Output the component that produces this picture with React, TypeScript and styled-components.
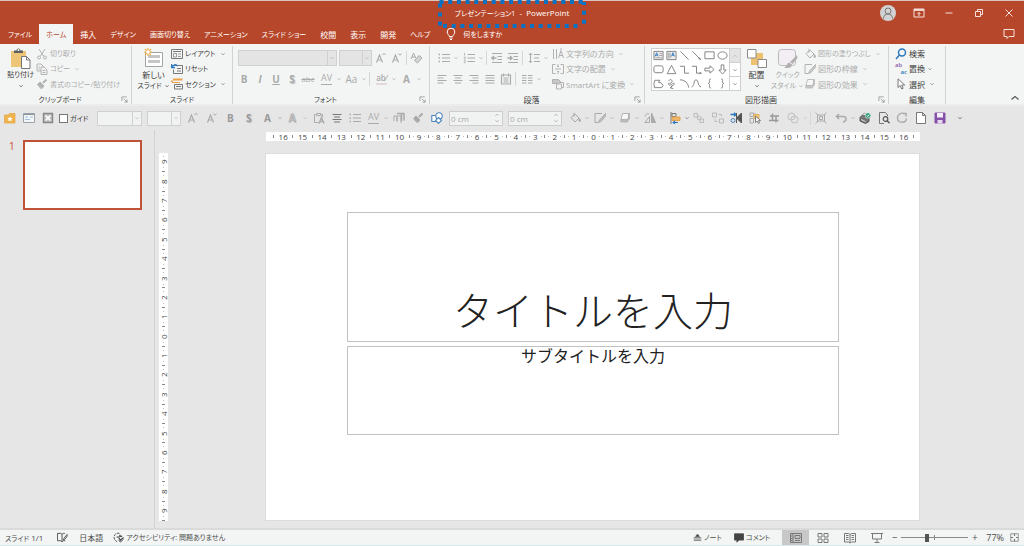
import React from "react";
import styled, { createGlobalStyle, css } from "styled-components";

const GlobalStyle = createGlobalStyle`
  *, *::before, *::after { box-sizing: border-box; }
  body { margin: 0; background: #e6e6e6; }
  body, button, input, select {
    font-family: "Open Sans", "Noto Sans CJK JP", sans-serif;
    font-size: 8px;
    line-height: 11px;
    font-feature-settings: "palt";
    color: #3b3b3b;
  }
  button { border: 0; padding: 0; background: none; white-space: nowrap; }
  svg { display: block; flex: none; }
`;

/* ---------- icons ---------- */

const art: Record<string, React.ReactNode> = {
  cut: <><path d="M3 1l4.500 7M9 1L4.500 8" /><circle cx="3" cy="9.500" r="1.500" /><circle cx="9" cy="9.500" r="1.500" /></>,
  copy: <><path d="M1 1h4l2 2v5H1z" /><path d="M5 4h3l3 3v4.500H5z" fill="#f3f3f3" /><path d="M6.500 7.500h3M6.500 9.500h3M2.500 4h1.500M2.500 6h1.500" /></>,
  brush: <><path d="M10.500 1.500L7 5" strokeWidth="2" /><path d="M4 4l4 4-2 2.500-4.500-4z" fill="currentColor" /><path d="M2.500 8l3 3" /></>,
  layout: <><path d="M.5 1.500h11v9H.5z" /><path d="M2 3.500h8" /><path d="M2.500 5.500h3v3.500h-3zM7 6h3M7 8.500h3" strokeWidth=".7" /></>,
  reset: <><path d="M3 2.500h8.500v8H2.500v-4M6 5.500h4M6 8h4" /><path d="M.5 1v3.500H4M.8 4.300C2 1.500 5 1 6.500 3" stroke="#2b78c0" strokeWidth="1.400" /></>,
  section: <><path d="M2 1.500h9.500M1 4V2.500" stroke="#e9a24a" strokeWidth="1.800" /><path d="M1 4.500h8" stroke="#e9a24a" /><path d="M3.500 6.500h8v4.500h-8z" /><path d="M5 8.500h5" /></>,
  fontUp: <><path d="M1.500 10.500L4.500 3l3 7.500M2.500 8h4" strokeWidth="1.200" /><path d="M7.500 3L9 1.300 10.500 3" /></>,
  fontDown: <><path d="M1.500 10.500L4.500 3l3 7.500M2.500 8h4" strokeWidth="1.200" /><path d="M7.500 1.500L9 3.200l1.500-1.700" /></>,
  eraser: <><path d="M1 7L3.500 1l2.200 5M2 5h3" /><path d="M4.500 8.500l4.500-5L12 6l-4.500 5z" fill="currentColor" fillOpacity=".45" /></>,
  bullets: <><path d="M4 2.500h8M4 6h8M4 9.500h8" /><path d="M.5 2.500H2M.5 6H2M.5 9.500H2" strokeWidth="1.600" /></>,
  numbers: <><path d="M4.500 2.500H12M4.500 6H12M4.500 9.500H12" /><path d="M1.500 1v2.500M.8 5h1.400v2H.8M.8 8.500h1.400v2.200H.8" strokeWidth=".8" /></>,
  outdent: <><path d="M1 1.500h10M6.500 4.500H11M6.500 7.500H11M1 10.500h10" /><path d="M5.500 6H.8M3 4L.8 6 3 8" strokeWidth="1.300" /></>,
  indent: <><path d="M1 1.500h10M6.500 4.500H11M6.500 7.500H11M1 10.500h10" /><path d="M.5 6h4.700M3 4l2.200 2L3 8" strokeWidth="1.300" /></>,
  spacing: <><path d="M6 2.500h6M6 6h5M6 9.500h6" /><path d="M2.500 1.500v9M.8 3l1.700-1.800L4.200 3M.8 9l1.700 1.800L4.200 9" /></>,
  left: <path d="M1.500 2.500h9M1.500 5h6M1.500 7.500h9M1.500 10h6" />,
  center: <path d="M1.500 2.500h9M3 5h6M1.500 7.500h9M3 10h6" />,
  right: <path d="M1.500 2.500h9M4.500 5h6M1.500 7.500h9M4.500 10h6" />,
  justify: <path d="M1.500 2.500h9M1.500 5h9M1.500 7.500h9M1.500 10h9" />,
  distribute: <path d="M1.500 2h9v9h-9zM3.500.5v3M8.500.5v3M3.500 5h5M3.500 7h5M3.500 9h5" strokeWidth="1.200" />,
  columns: <path d="M1 2.500h4.500M1 5h4.500M1 7.500h4.500M1 10h4.500M7 2.500h4.500M7 5h4.500M7 7.500h4.500M7 10h4.500" />,
  direction: <><path d="M1.500 1v10M4.500 1v10" /><path d="M6.500 10L9 2.500l2.500 7.500M7.200 7.500h3.600M9 0v2" /></>,
  textAlign: <><path d="M3.500 1.500h-3v9h3M8.500 1.500h3v9h-3M3 6h6" /><path d="M6 1v3M5 3l1 1 1-1M6 11V8M5 9l1-1 1 1" /></>,
  smartArt: <><path d="M.5 1.500h6l2 2-2 2h-6z" fill="currentColor" fillOpacity=".7" /><path d="M4.500 6h5v5h-5z" fill="#f3f3f3" /><path d="M7.500 4.500h4v5h-2" /></>,
  fill: <><path d="M2 5.500L6 2l4 4-4 4z" /><path d="M5 .8v4" /><path d="M10.500 6.500c1.500 2 1.200 3 .3 3s-1-1-.3-3z" fill="currentColor" /></>,
  outline: <><path d="M8 1.500H1v9h3" /><path d="M11.500 1.500L5.500 8l-1 2.500 2.500-1 5-6z" fill="currentColor" fillOpacity=".6" /></>,
  effect: <><path d="M3.500 2.500L5 1h6v5.500L8.500 10.500H2L1 9z" fill="currentColor" fillOpacity=".75" stroke="none" /><path d="M3.500 1.500h6v4.500l-2 1.500H2z" fill="#f6f6f6" strokeWidth=".8" /></>,
  search: <g stroke="#2b78c0" strokeWidth="1.500"><circle cx="7" cy="4.500" r="3.500" /><path d="M4.500 7L1 11" /></g>,
  select: <path d="M3 .8v8.700l2.200-2 1.500 3.500 1.500-.7-1.500-3.300h3z" fill="#fff" />,
  folder: <><path d="M.5 3h4l1-1.500H11V11H.5z" fill="#f0b44c" stroke="#e2a545" strokeWidth=".7" /><path d="M6 4.500l.8 1.600 1.800.2-1.300 1.200.3 1.800L6 8.400l-1.600.9.300-1.800-1.300-1.200 1.800-.2z" fill="#fff" stroke="none" /></>,
  form: <><path d="M.5 1.500h11v9H.5z" fill="#f3f5f7" stroke="#9aa2ab" /><path d="M.5 2.500h11" stroke="#8a929b" /><path d="M2 5h3M7 5h3M2 7.500h5" stroke="#9fc0de" /></>,
  closeBox: <><path d="M1.500 1.500h9v9h-9z" strokeWidth="1.400" fill="currentColor" fillOpacity=".4" /><path d="M3.500 3.500l5 5M8.500 3.500l-5 5" stroke="#fff" strokeWidth="1.600" /></>,
  pasteText: <><path d="M2.500 2.500h-1v8h4M8 2.500h1.500V5M3.500 1.500h4v2h-4z" /><path d="M6 11.500l2.500-6 2.500 6M7 9.500h3" strokeWidth="1.400" /></>,
  paragraph: <><path d="M1 4h7v7M1 4v5" /><path d="M4 1.500h7.500M11 1.500v7M8.500 2v7M4 4.500v5" strokeWidth="1.500" /></>,
  shapes: <g stroke="#4d86bd" strokeWidth="1.100"><path d="M.8 3.500h5v6h-5z" fill="#fff" /><circle cx="8" cy="4" r="3.200" fill="#fff" /><path d="M7.500 5.500l3 3-3 3-3-3z" fill="#fff" /></g>,
  rotate: <><path d="M7.500 1v9.500h4z" fill="currentColor" /><path d="M5.500 4.500v6H.8z" /><path d="M1 4.500C1.500 2 3.500 1.200 5 2" /></>,
  alignObj: <><path d="M2 0v12" stroke="#777" /><path d="M3 1.500h4v3H3z" stroke="#777" /><path d="M3 5h8v3.500H3z" fill="#f0b76a" stroke="#e2a14b" /><path d="M9 10.500H4M6 9l-1.800 1.500L6 12" stroke="#2b78c0" strokeWidth="1.200" /></>,
  group: <><path d="M1 1.500h3.500V5H1zM7 7h3.500v3.500H7z" /><circle cx="6" cy="6" r="1.800" /></>,
  ungroup: <path d="M.5 1h4v4h-4zM7.500 7h4v4h-4zM6.500 2.500h3v2M3 7v2.500h2.500" />,
  sync: <><path d="M11.500 1v10L6.500 6z" fill="#555" stroke="#555" /><path d="M.5 2.500h5M4 .8l2 1.700-2 1.800" stroke="#2b78c0" strokeWidth="1.300" /><circle cx="3" cy="8.500" r="2" stroke="#4d86bd" /><path d="M6.500 1v10" stroke="#555" /></>,
  pane: <><path d="M1 1h3.500v3.500H1zM1 6.500h3.500V11H1zM6 1v2" /><path d="M5 2.500h5v4H5z" fill="#f2c77c" stroke="#e5b25d" /><path d="M6.500 4v6.500l1.700-1.400L9.500 11.500l1-.5L9.500 8.500h2z" fill="#fff" stroke="#666" strokeWidth=".8" /></>,
  crop: <path d="M4.500 1.500v7h6M2 4h6v6.500M4.500 8.500H1M8 4h3M6.500 2.500" strokeWidth="1.400" />,
  merge: <><circle cx="4.500" cy="4.500" r="3.500" /><circle cx="7.500" cy="7.500" r="3.500" /></>,
  fit: <><path d="M2.500 3h7v6h-7zM4.500 4.500h3v3h-3z" /><path d="M.5.5L3 3M11.500.5L9 3M.5 11.500L3 9M11.500 11.500L9 9" /></>,
  undo: <path d="M4 2L1.500 4.500 4 7M1.500 4.500H8c4 0 4 5 0 5.500" strokeWidth="1.500" />,
  printCheck: <><path d="M1 5.500l3-3 6 3v4l-3.500 2L1 9z" fill="#777" stroke="#555" /><path d="M2 7.500l4.500 2" stroke="#ddd" /><path d="M3 3l2-2 3 1" fill="#fff" /><circle cx="9" cy="3.500" r="2.800" fill="#36a07a" stroke="#fff" strokeWidth=".5" /><path d="M7.700 3.500l1 1 1.700-2" stroke="#fff" strokeWidth=".9" /></>,
  preview: <><path d="M9.500 4V3L7.500.5h-6v11H6" stroke="#777" /><circle cx="7.500" cy="7" r="2.300" stroke="#555" strokeWidth="1.200" /><path d="M9.200 8.700l2.300 2.500" stroke="#555" strokeWidth="1.400" /></>,
  redo: <path d="M7 1.500h3v3M9.500 2C5-.5 1 3 1.500 6.500c.7 5 8.300 5 9 .2" strokeWidth="1.400" />,
  page: <path d="M1.500.5h6l3 3v8h-9zM7.500.5v3h3" fill="#fff" stroke="#777" />,
  save: <><path d="M1 1h10v10H1z" fill="#8650a8" stroke="#8650a8" /><path d="M3 1h6v4.500H3z" fill="#f4eef8" stroke="none" /><path d="M3.500 8h5v3.500h-5z" fill="#e7d9ef" stroke="none" /></>,
  book: <><path d="M5.500 2.500L4 1.500H.5v8h3.500l1.500 1 1.500-1h2M5.500 2.500v8M5.500 2.500L7 1.500h1.500" /><path d="M11.500 2L7.500 7l-.5 1.500L8.500 8 12 3.500" /></>,
  access: <><path d="M7 1.500C3.500.5.8 3 1.200 6.500c.3 2 1.800 3.500 3.300 4" strokeDasharray="3 1" /><path d="M4 5.500l6-1M7.500 3v2M6 5.500L8 9l3.500-3" strokeWidth="1.300" /><path d="M6 8.500L8 11l3.500-3" /></>,
  note: <><path d="M1 6.500h10M1 9.500h10" strokeWidth="1.300" /><path d="M6 1.500L3.500 4.500h5z" fill="currentColor" /></>,
  comment: <path d="M.5 1h11v7.500H6L3.500 11V8.500h-3z" fill="#444" stroke="#444" />,
  normal: <><path d="M.5 1.500h11v9H.5zM3 1.500v9" /><path d="M5 3.500h5v3H5zM5 8.500h5M1 4h1.500M1 6.500h1.500M1 8.500h1.500" /></>,
  sorter: <path d="M1 1.500h4v3.500H1zM7 1.500h4v3.500H7zM1 7h4v3.500H1zM7 7h4v3.500H7z" />,
  reading: <path d="M6 2.500L4.500 1.500h-4v8.500h4L6 11l1.500-1h4V1.500h-4zM6 2.500V11M2 3.500h2.500M2 5.500h2.500M2 7.500h2.500M7.500 3.500H10M7.500 5.500H10M7.500 7.500H10" />,
  show: <path d="M0 1.500h12M1.500 1.500v5.500h9V1.500M6 7v3.500M3.500 10.500h5" />,
  fitWindow: <><path d="M1 1h10v10H1z" /><path d="M6 1v3M6 11V8M1 6h3M11 6H8" strokeWidth="1.500" /></>,
  bulb: <path d="M4.300 8.500C4 7 2.200 6 2.200 4a3.800 3.800 0 017.600 0c0 2-1.800 3-2.100 4.500zM4.500 10h3M5 11.500h2" />,
  ribbonOpts: <><path d="M1 2h10v8H1z" /><path d="M1 3h10" strokeWidth="1.800" /><path d="M6 9V5.500M4.500 7L6 5.500 7.500 7" /></>,
  minimize: <path d="M2.500 6h7" />,
  restore: <path d="M2.500 4.500h5v5h-5zM4.500 4.500v-2h5v5h-2" />,
  close: <path d="M2.500 2.500l7 7M9.500 2.500l-7 7" />,
  speech: <path d="M1 1.500h10v7H6L4 10.500v-2H1z" />,
  collapse: <path d="M2.500 7.500L6 4.500l3.500 3" strokeWidth="1.200" />,
  textBoxH: <><path d="M1 1.500h10v9H1z" fill="#eee" /><path d="M2.300 7L4 3l1.600 4M3 5.700h2" stroke="#2b78c0" /><path d="M7 4h3M7 6h3M2.500 8.500H10" strokeWidth=".7" /></>,
  textBoxV: <><path d="M1 1.500h10v9H1z" fill="#eee" /><path d="M6 7l1.600-4 1.600 4M6.700 5.700h2" stroke="#2b78c0" /><path d="M3 3v6M4.500 3v6" strokeWidth=".7" /></>,
  line: <path d="M1.500 1.500l9 9" />,
  arrowLine: <><path d="M1.500 1.500l8 8" /><path d="M11 11L7.800 9.800l2-2z" fill="currentColor" stroke="none" /></>,
  rect: <path d="M1 2h10v7.500H1z" />,
  oval: <ellipse cx="6" cy="6" rx="5" ry="4" />,
  round: <rect x="1" y="2" width="10" height="7.500" rx="2" />,
  triangle: <path d="M6 1.500l4.700 9H1.300z" />,
  elbow: <path d="M1 2.500h5V10h5" />,
  elbowArrow: <><path d="M1 2.500h5V10h4" /><path d="M12 10L9.500 8.500v3z" fill="currentColor" stroke="none" /></>,
  arrowR: <path d="M1 4.500h5.500V2L11 6l-4.500 4V7.500H1z" />,
  arrowD: <path d="M4.500 1v5.500H2L6 11l4-4.500H7.500V1z" />,
  freeform: <path d="M2 2.500h5.500L6 5h2.500l2.500 3-1.500 2.500h-8L1 6z" />,
  scribble: <path d="M3 3c2-3 5 0 3 2S2 4 3 7s5-3 6-1-4 2-4 5M7 8l-2 3 3 .5" />,
  arc: <path d="M1 2c6 0 9 4 9.500 8.500" />,
  wave: <path d="M.5 9.500C4 9.500 2.500 2 5.500 2S7 9.500 11 9.500" />,
  braceL: <path d="M7.500 1C5.500 1 6 2.500 6 4S5.500 6 4.500 6C5.500 6 6 6.500 6 8s-.5 3 1.500 3" />,
  braceR: <path d="M4.500 1C6.500 1 6 2.500 6 4s.5 2 1.500 2C6.500 6 6 6.500 6 8s.5 3-1.500 3" />,
  launcher: <path d="M2.500 8V2.500H9M5 5l4.500 4.500M9.500 6v3.500H6" />,
};

const Icon = ({ name, size = 12 }: { name: string; size?: number }) => (
  <svg width={size} height={size} viewBox="0 0 12 12" fill="none" stroke="currentColor" aria-hidden="true">
    {art[name]}
  </svg>
);

const Chevron = () => (
  <svg width="6" height="6" viewBox="0 0 6 6" fill="none" stroke="currentColor" strokeOpacity=".75" aria-hidden="true">
    <path d="M1.500 2.300L3 3.800l1.500-1.500" />
  </svg>
);

const PasteIcon = () => (
  <svg width="21" height="21" viewBox="0 0 21 21" fill="none" aria-hidden="true">
    <path d="M1 3h15v16H1z" fill="#eec677" />
    <path d="M4 2.500h2.500a2 2 0 014 0H13V5H4z" fill="#5f5f5f" />
    <circle cx="8.500" cy="2" r="1" fill="#fff" />
    <path d="M11.500 8.500h5l3.500 3.500v8.500h-8.500z" fill="#fff" stroke="#777" />
    <path d="M16.500 8.500V12H20" stroke="#777" />
  </svg>
);

const NewSlideIcon = () => (
  <svg width="21" height="21" viewBox="0 0 21 21" fill="none" aria-hidden="true">
    <path d="M2.500 4.500h17v14h-17z" fill="#fff" stroke="#a3a3a3" />
    <path d="M5 7h12v3H5zM5 12h12v3H5z" fill="#c6c6c6" />
    <path d="M5 0v8M1 4h8M2 1l6 6M8 1L2 7" stroke="#ecae4c" strokeWidth="1.200" />
    <circle cx="5" cy="4" r="1.800" fill="#fff" />
  </svg>
);

const ArrangeIcon = () => (
  <svg width="21" height="21" viewBox="0 0 21 21" fill="none" aria-hidden="true">
    <path d="M5 5h12v12H5z" fill="#eec072" />
    <path d="M1.500 1.500h8.500v8.500H1.500zM12 11.500h8.500v8H12z" fill="#fff" stroke="#8a8a8a" />
  </svg>
);

const QuickStyleIcon = () => (
  <svg width="21" height="21" viewBox="0 0 21 21" fill="none" aria-hidden="true">
    <rect x="1.500" y="1.500" width="17" height="16" rx="3" fill="#f3eef4" stroke="#bdb8be" />
    <path d="M20 7l-7 7 2.500 2L20.500 10zM12 14.500c-2 0-1.500 4-5 5 4 1.200 8 .5 8-3z" fill="#b0b0b0" />
  </svg>
);

/* Labels made mostly of kana are set one step smaller than kanji labels. */
const Kana = styled.span`
  font-size: 7px;
`;

/* ---------- title bar and tabs ---------- */

const Shell = styled.div`
  min-height: 100vh;
  display: flex;
  flex-direction: column;
`;

const TitleBar = styled.header`
  position: relative;
  height: 24px;
  display: flex;
  align-items: center;
  justify-content: flex-end;
  background: #b7472a;
  border-top: 1px solid #dcc3bc;
  color: #fff;
`;

const DocumentTitle = styled.h1`
  position: absolute;
  top: 5px;
  left: 50%;
  width: 148px;
  transform: translateX(-50%);
  margin: 0;
  font-size: 8px;
  line-height: 14px;
  font-weight: 400;
  text-align: center;
  white-space: pre;
`;

const DottedFrame = styled.svg`
  position: absolute;
  top: -6px;
  left: 0;
  z-index: 1;
`;

const Avatar = styled.button`
  width: 16px;
  height: 16px;
  margin-right: 8px;
  border-radius: 50%;
  background: #d2d2d2;
  color: #777;
  overflow: hidden;
`;

const WindowButton = styled.button`
  width: 30px;
  height: 20px;
  display: grid;
  place-items: center;
  color: #f6e3de;
`;

const TabBar = styled.nav`
  height: 20px;
  display: flex;
  background: #b7472a;
  color: #fff;
`;

const Tab = styled.button<{ $active?: boolean; $kana?: boolean }>`
  padding: 0 7px;
  font-size: ${p => (p.$kana ? 7 : 8)}px;
  color: ${p => (p.$active ? "#b7472a" : "#fff")};
  background: ${p => (p.$active ? "#f3f5f4" : "transparent")};
  &:first-child { padding-left: 8px; }
`;

const TellMe = styled.button`
  display: flex;
  align-items: center;
  gap: 6px;
  margin-left: 8px;
  color: #fff;
`;

const CommentsButton = styled(WindowButton)`
  margin-left: auto;
`;

/* ---------- ribbon ---------- */

const Ribbon = styled.div`
  height: 62px;
  display: flex;
  padding-top: 2px;
  background: #f3f5f4;
  border-bottom: 2px solid #ececec;
`;

const GroupBox = styled.section<{ $w: number; $pad: number }>`
  width: ${p => p.$w}px;
  height: 58px;
  padding-left: ${p => p.$pad}px;
  flex: none;
  display: flex;
  flex-direction: column;
  border-right: 1px solid #d2d2d2;
`;

const GroupBody = styled.div`
  height: 46px;
  display: flex;
`;

const GroupFoot = styled.div<{ $pad: number }>`
  height: 12px;
  margin-left: -${p => p.$pad}px;
  padding-top: 2px;
  display: flex;
  align-items: center;
`;

const GroupName = styled.h2<{ $kana?: boolean }>`
  flex: 1;
  margin: 0;
  font-size: ${p => (p.$kana ? 7 : 8)}px;
  line-height: 11px;
  font-weight: 400;
  text-align: center;
`;

const Launcher = styled.button`
  width: 11px;
  color: #8c8c8c;
`;

type GroupProps = { w: number; pad: number; name: string; kana?: boolean; launcher?: boolean; children: React.ReactNode };

const Group = ({ w, pad, name, kana, launcher, children }: GroupProps) => (
  <GroupBox $w={w} $pad={pad}>
    <GroupBody>{children}</GroupBody>
    <GroupFoot $pad={pad}>
      <GroupName $kana={kana}>{name}</GroupName>
      {launcher && <Launcher aria-label={`${name}の詳細`}><Icon name="launcher" size={9} /></Launcher>}
    </GroupFoot>
  </GroupBox>
);

const BigButton = styled.button<{ $off?: boolean }>`
  width: 31px;
  padding-top: 2px;
  display: flex;
  flex-direction: column;
  align-items: center;
  color: ${p => (p.$off ? "#a6a6a6" : "#3b3b3b")};
`;

const BigLine = styled.span`
  height: 11px;
  display: flex;
  align-items: center;
  gap: 2px;
`;

const Stack = styled.div`
  display: grid;
  grid-template-rows: repeat(3, 1fr);
  justify-items: start;
`;

const RowButton = styled.button<{ $off?: boolean; $kana?: boolean }>`
  display: flex;
  align-items: center;
  gap: 2px;
  font-size: ${p => (p.$kana ? 7 : 8)}px;
  color: ${p => (p.$off ? "#ababab" : "#3b3b3b")};
  svg { color: ${p => (p.$off ? "#b2b2b2" : "#777")}; }
  svg + span + svg { margin-left: 2px; }
`;

const Row = ({ icon, text, menu, off, kana }: { icon: React.ReactNode; text: string; menu?: boolean; off?: boolean; kana?: boolean }) => (
  <RowButton $off={off} $kana={kana}>
    {typeof icon === "string" ? <Icon name={icon} /> : icon}
    <span>{text}</span>
    {menu && <Chevron />}
  </RowButton>
);

const ToolRows = styled.div<{ $w?: number }>`
  ${p => p.$w && css`width: ${p.$w}px;`}
  padding-top: 4px;
  display: flex;
  flex-direction: column;
  gap: 5px;
`;

const ToolRow = styled.div`
  height: 16px;
  display: flex;
  align-items: center;
`;

const Tool = styled.button<{ $menu?: boolean; $c?: string }>`
  width: ${p => (p.$menu ? 25 : 16)}px;
  height: 16px;
  display: flex;
  align-items: center;
  color: ${p => p.$c ?? "#aaa"};
`;

const ToolFace = styled.span`
  flex: 1;
  display: grid;
  place-items: center;
`;

const Glyph = styled.span<{ $bold?: boolean; $italic?: boolean; $line?: string; $size?: number; $shadow?: boolean }>`
  font-size: ${p => p.$size ?? 10}px;
  line-height: 12px;
  font-weight: ${p => (p.$bold ? 700 : 400)};
  font-style: ${p => (p.$italic ? "italic" : "normal")};
  text-decoration: ${p => p.$line ?? "none"};
  text-shadow: ${p => (p.$shadow ? "1px 1px 1px #bbb" : "none")};
`;

const HollowGlyph = styled(Glyph)`
  color: transparent;
  -webkit-text-stroke: 1px #b0b0b0;
`;

const SpacedGlyph = styled(Glyph)`
  height: 12px;
  line-height: 9px;
  border-bottom: 1px solid currentColor;
`;

const HighlightGlyph = styled(Glyph)`
  height: 12px;
  line-height: 9px;
  font-weight: 600;
  border-bottom: 2px solid #e4d8de;
`;

const Divider = styled.span<{ $gap?: number }>`
  width: 1px;
  height: 14px;
  margin: 0 ${p => p.$gap ?? 1}px;
  background: #d6d6d6;
`;

const TB = ({ face, name, menu, c }: { face: React.ReactNode; name: string; menu?: boolean; c?: string }) => (
  <Tool $menu={menu} $c={c} aria-label={name}>
    <ToolFace>{typeof face === "string" ? <Icon name={face} /> : face}</ToolFace>
    {menu && <Chevron />}
  </Tool>
);

const ComboBox = styled.span<{ $w: number; $h: number; $bg: string }>`
  position: relative;
  width: ${p => p.$w}px;
  height: ${p => p.$h}px;
  display: flex;
  align-items: center;
  justify-content: flex-end;
  background: ${p => p.$bg};
  border: 1px solid #d0d0d0;
  color: #b0b0b0;
  select {
    position: absolute;
    inset: 0;
    width: 100%;
    border: 0;
    padding: 0;
    background: none;
    appearance: none;
  }
  span {
    width: 9px;
    height: 100%;
    display: grid;
    place-items: center;
    border-left: 1px solid #d0d0d0;
  }
`;

const Combo = ({ w, h, bg, name }: { w: number; h: number; bg: string; name: string }) => (
  <ComboBox $w={w} $h={h} $bg={bg}>
    <select aria-label={name}><option value="" /></select>
    <span><Chevron /></span>
  </ComboBox>
);

const Gallery = styled.div`
  width: 90px;
  height: 43px;
  margin-top: 2px;
  display: grid;
  grid-template-columns: 1fr 11px;
  background: #fff;
  border: 1px solid #cfcfcf;
  color: #7d7d7d;
`;

const GalleryGrid = styled.div`
  display: grid;
  grid-template-columns: repeat(6, 1fr);
  button { display: grid; place-items: center; color: inherit; }
`;

const GalleryScroll = styled.div`
  display: grid;
  border-left: 1px solid #cfcfcf;
  button {
    display: grid;
    place-items: center;
    border-top: 1px solid #cfcfcf;
    color: #6d6d6d;
  }
  button:first-child { border-top: 0; background: #e3e3e3; color: #b5b5b5; }
  button:first-child svg { transform: rotate(180deg); }
`;

const ReplaceMark = styled.span`
  width: 12px;
  display: grid;
  font-size: 6px;
  line-height: 7px;
  font-weight: 600;
  color: #8a5aa8;
  text-align: left;
  span { color: #2b78c0; text-align: right; }
`;

const Collapse = styled.button`
  margin: auto 3px 0 auto;
  color: #555;
`;

/* ---------- quick access bar ---------- */

const QuickBar = styled.div`
  height: 24px;
  padding-left: 1px;
  display: flex;
  align-items: center;
  background: #e6e6e6;
`;

const Cluster = styled.div<{ $w: number; $ml?: number }>`
  width: ${p => p.$w}px;
  margin-left: ${p => p.$ml ?? 0}px;
  display: flex;
  button { flex: 1; }
`;

const GuideCheck = styled.label`
  width: 40px;
  padding-left: 2px;
  display: flex;
  align-items: center;
  gap: 2px;
  white-space: nowrap;
  input {
    width: 9px;
    height: 9px;
    margin: 0;
    appearance: none;
    background: #fff;
    border: 1px solid #777;
  }
`;

const Spacer = styled.span<{ $w: number }>`
  width: ${p => p.$w}px;
`;

const SpinBox = styled.span`
  width: 54px;
  height: 15px;
  display: flex;
  background: #f1f3f2;
  border: 1px solid #cdcdcd;
  & + & { margin-left: 5px; }
  input {
    flex: 1;
    min-width: 0;
    padding: 0 1px;
    border: 0;
    background: none;
    color: #a8a8a8;
    font-size: 8px;
  }
  button { display: block; width: 8px; height: 6px; color: #999; }
  button:first-child svg { transform: rotate(180deg); }
`;

const Spin = ({ name }: { name: string }) => (
  <SpinBox>
    <input aria-label={name} defaultValue="0 cm" />
    <span>
      <button aria-label="増やす"><Chevron /></button>
      <button aria-label="減らす"><Chevron /></button>
    </span>
  </SpinBox>
);

/* ---------- work area ---------- */

const Work = styled.main`
  flex: 1;
  display: flex;
  background: #e6e6e6;
  border-bottom: 2px solid #dadada;
`;

const SlideList = styled.aside`
  width: 155px;
  flex: none;
  padding: 10px 12px 0 9px;
  display: flex;
  align-items: flex-start;
  border-right: 1px solid #d2d2d2;
`;

const SlideNumber = styled.span`
  width: 14px;
  font-size: 10px;
  line-height: 12px;
  color: #d0472c;
`;

const Thumb = styled.button`
  flex: 1;
  height: 70px;
  background: #fff;
  border: 2px solid #bf5338;
`;

const Editor = styled.div`
  flex: 1;
  min-width: 0;
  padding: 2px 0 7px 4px;
  display: grid;
  grid-template-columns: 9px 97px minmax(0, 1fr) 104px;
  grid-template-rows: 9px auto;
  row-gap: 12px;
  align-content: start;
`;

const RulerTrack = styled.div<{ $vertical?: boolean }>`
  display: flex;
  background: #fff;
  color: #444;
  font-size: 8px;
  line-height: 9px;
  ${p => p.$vertical
    ? css`grid-column: 1; grid-row: 2; writing-mode: vertical-rl; transform: rotate(180deg);`
    : css`grid-column: 3; grid-row: 1; margin-left: 1px; padding: 0 7px;`}
`;

const RulerCell = styled.span`
  flex: 1 1 0;
  min-width: 0;
  min-height: 0;
  display: flex;
  align-items: center;
  justify-content: space-between;
`;

const RulerEnd = styled.span`
  width: 0;
  display: flex;
  align-items: center;
`;

const Tick = styled.i<{ $dot?: boolean }>`
  flex: none;
  inline-size: 1px;
  block-size: ${p => (p.$dot ? 1 : 3)}px;
  background: ${p => (p.$dot ? "#bbb" : "#888")};
`;

const Ruler = ({ max, vertical }: { max: number; vertical?: boolean }) => (
  <RulerTrack $vertical={vertical} aria-hidden="true">
    {Array.from({ length: max * 2 + 1 }, (_, i) => Math.abs(i - max)).map((n, i) => (
      <RulerCell key={i}>
        <Tick />
        {n < 10 && <Tick $dot />}
        <span>{n}</span>
        {n < 10 && <Tick $dot />}
        <span />
      </RulerCell>
    ))}
    {!vertical && <RulerEnd><Tick /></RulerEnd>}
  </RulerTrack>
);

const Slide = styled.article`
  grid-column: 3;
  grid-row: 2;
  aspect-ratio: 655 / 368;
  display: grid;
  grid-template-columns: 82fr 492fr 81fr;
  grid-template-rows: 59fr 130fr 4fr 89fr 86fr;
  background: #fff;
  box-shadow: inset 0 0 0 1px #dcdcdc;
`;

const Placeholder = styled.div<{ $row: number; $title?: boolean }>`
  grid-column: 2;
  grid-row: ${p => p.$row};
  min-height: 0;
  display: flex;
  justify-content: center;
  align-items: ${p => (p.$title ? "flex-end" : "flex-start")};
  border: 1px solid #c2c2c2;
  font-family: "Noto Sans CJK JP", sans-serif;
  font-feature-settings: normal;
  color: #222;
`;

const SlideTitle = styled.h2`
  margin: 0 0 8px;
  font-size: 40px;
  line-height: 48px;
  font-weight: 300;
`;

const Subtitle = styled.p`
  margin: 0;
  font-size: 16px;
  line-height: 16px;
`;

/* ---------- status bar ---------- */

const StatusBar = styled.footer`
  height: 16px;
  display: flex;
  align-items: center;
  padding-left: 5px;
  background: #f3f5f4;
  border-bottom: 1px solid #d5e8ea;
  white-space: nowrap;
`;

const StatusItem = styled.button<{ $ml?: number }>`
  margin-left: ${p => p.$ml ?? 0}px;
  display: flex;
  align-items: center;
  gap: 2px;
  color: #4a4a4a;
`;

const StatusRight = styled.div`
  margin-left: auto;
  display: flex;
  align-items: center;
`;

const ViewButton = styled.button<{ $active?: boolean; $w?: number }>`
  width: ${p => p.$w ?? 27}px;
  height: 15px;
  display: grid;
  place-items: center;
  color: #777;
  background: ${p => (p.$active ? "#c8c8c8" : "transparent")};
`;

const ZoomRange = styled.input`
  width: 67px;
  height: 12px;
  margin: 0 2px;
  appearance: none;
  background: linear-gradient(#888, #888) center / 100% 1px no-repeat,
    linear-gradient(#888, #888) center / 1px 5px no-repeat;
  &::-webkit-slider-thumb {
    appearance: none;
    width: 4px;
    height: 8px;
    background: #555;
  }
`;

const ZoomButton = styled.button`
  width: 9px;
  font-size: 10px;
  color: #555;
`;

const ZoomValue = styled(StatusItem)`
  font-size: 9px;
`;

const tabs: [string, boolean][] = [
  ["ファイル", true], ["ホーム", true], ["挿入", false], ["デザイン", true], ["画面切り替え", true],
  ["アニメーション", true], ["スライド ショー", true], ["校閲", false], ["表示", false], ["開発", false], ["ヘルプ", true],
];

const shapes = [
  "textBoxH", "textBoxV", "line", "arrowLine", "rect", "oval",
  "round", "triangle", "elbow", "elbowArrow", "arrowR", "arrowD",
  "freeform", "scribble", "arc", "wave", "braceL", "braceR",
];

export default function App() {
  return (
    <Shell>
      <GlobalStyle />
      <TitleBar>
        <DocumentTitle>
          <Kana>プレゼンテーション1</Kana>{"  -  PowerPoint"}
          <DottedFrame width="148" height="28" viewBox="0 0 148 28" fill="none" stroke="#0b72c4" strokeWidth="4" aria-hidden="true">
            <path d="M1.500 2H148M5 26H144" strokeDasharray="4 4.700" />
            <path d="M2 3.500V26M146 10.700V26M146 2V5" strokeDasharray="4 5" />
          </DottedFrame>
        </DocumentTitle>
        <Avatar aria-label="アカウント">
          <svg width="16" height="16" viewBox="0 0 16 16" fill="none" stroke="currentColor" aria-hidden="true">
            <circle cx="8" cy="6" r="3" />
            <path d="M3.500 13.500c0-6 9-6 9 0" />
          </svg>
        </Avatar>
        {[["ribbonOpts", "リボンの表示オプション"], ["minimize", "最小化"], ["restore", "元に戻す"], ["close", "閉じる"]].map(([i, n]) => (
          <WindowButton key={i} aria-label={n}><Icon name={i} /></WindowButton>
        ))}
      </TitleBar>

      <TabBar>
        {tabs.map(([t, kana]) => <Tab key={t} $kana={kana} $active={t === "ホーム"}>{t}</Tab>)}
        <TellMe><Icon name="bulb" /><Kana>何をしますか</Kana></TellMe>
        <CommentsButton aria-label="コメント"><Icon name="speech" /></CommentsButton>
      </TabBar>

      <Ribbon>
        <Group w={132} pad={5} name="クリップボード" kana launcher>
          <BigButton><PasteIcon /><BigLine><Kana>貼り付け</Kana></BigLine><BigLine><Chevron /></BigLine></BigButton>
          <Stack>
            <Row off kana icon="cut" text="切り取り" />
            <Row off kana icon="copy" text="コピー" menu />
            <Row off kana icon="brush" text="書式のコピー/貼り付け" />
          </Stack>
        </Group>

        <Group w={101} pad={6} name="スライド" kana>
          <BigButton>
            <NewSlideIcon />
            <BigLine>新しい</BigLine>
            <BigLine><Kana>スライド</Kana><Chevron /></BigLine>
          </BigButton>
          <Spacer $w={2} />
          <Stack>
            <Row kana icon="layout" text="レイアウト" menu />
            <Row kana icon="reset" text="リセット" />
            <Row kana icon="section" text="セクション" menu />
          </Stack>
        </Group>

        <Group w={197} pad={3} name="フォント" kana launcher>
          <ToolRows>
            <ToolRow>
              <Spacer $w={2} />
              <Combo w={99} h={16} bg="#e4e4e4" name="フォント" />
              <Spacer $w={2} />
              <Combo w={33} h={16} bg="#e4e4e4" name="フォント サイズ" />
              <Spacer $w={1} />
              <TB face="fontUp" name="フォント サイズの拡大" />
              <TB face="fontDown" name="フォント サイズの縮小" />
              <Divider />
              <TB face="eraser" name="書式のクリア" />
            </ToolRow>
            <ToolRow>
              <TB face={<Glyph $bold>B</Glyph>} name="太字" />
              <TB face={<Glyph $bold $italic>I</Glyph>} name="斜体" />
              <TB face={<Glyph $bold $line="underline">U</Glyph>} name="下線" />
              <TB face={<Glyph $bold $shadow>S</Glyph>} name="影" />
              <TB face={<Glyph $line="line-through" $size={8}>abc</Glyph>} name="取り消し線" />
              <Spacer $w={1} />
              <TB face={<SpacedGlyph $size={9}>AV</SpacedGlyph>} name="文字の間隔" menu />
              <TB face={<Glyph>Aa</Glyph>} name="文字種の変換" menu />
              <Divider $gap={2} />
              <TB face={<HighlightGlyph $size={8}>ab⁄</HighlightGlyph>} name="蛍光ペンの色" menu />
              <TB face={<Glyph $bold>A</Glyph>} name="フォントの色" menu />
            </ToolRow>
          </ToolRows>
        </Group>

        <Group w={215} pad={4} name="段落" launcher>
          <ToolRows $w={118}>
            <ToolRow>
              <TB face="bullets" name="箇条書き" menu />
              <TB face="numbers" name="段落番号" menu />
              <Divider $gap={2} />
              <TB face="outdent" name="インデントを減らす" />
              <TB face="indent" name="インデントを増やす" />
              <Divider />
              <TB face="spacing" name="行間" menu />
            </ToolRow>
            <ToolRow>
              <TB face="left" name="左揃え" />
              <TB face="center" name="中央揃え" />
              <TB face="right" name="右揃え" />
              <TB face="justify" name="両端揃え" />
              <TB face="distribute" name="均等割り付け" />
              <Divider />
              <TB face="columns" name="段組み" menu />
            </ToolRow>
          </ToolRows>
          <Stack>
            <Row off icon="direction" text="文字列の方向" menu />
            <Row off icon="textAlign" text="文字の配置" menu />
            <Row off icon="smartArt" text="SmartArt に変換" menu />
          </Stack>
        </Group>

        <Group w={244} pad={6} name="図形描画" launcher>
          <Gallery>
            <GalleryGrid>
              {shapes.map(s => <button key={s} aria-label={s}><Icon name={s} size={11} /></button>)}
            </GalleryGrid>
            <GalleryScroll>
              <button aria-label="前の行"><Chevron /></button>
              <button aria-label="次の行"><Chevron /></button>
              <button aria-label="その他"><Chevron /></button>
            </GalleryScroll>
          </Gallery>
          <BigButton><ArrangeIcon /><BigLine>配置</BigLine><BigLine><Chevron /></BigLine></BigButton>
          <BigButton $off>
            <QuickStyleIcon />
            <BigLine><Kana>クイック</Kana></BigLine>
            <BigLine><Kana>スタイル</Kana><Chevron /></BigLine>
          </BigButton>
          <Spacer $w={1} />
          <Stack>
            <Row off kana icon="fill" text="図形の塗りつぶし" menu />
            <Row off icon="outline" text="図形の枠線" menu />
            <Row off icon="effect" text="図形の効果" menu />
          </Stack>
        </Group>

        <Group w={57} pad={6} name="編集">
          <Stack>
            <Row icon="search" text="検索" />
            <Row icon={<ReplaceMark aria-hidden="true">ab<span>ac</span></ReplaceMark>} text="置換" menu />
            <Row icon="select" text="選択" menu />
          </Stack>
        </Group>
        <Collapse aria-label="リボンを折りたたむ"><Icon name="collapse" /></Collapse>
      </Ribbon>

      <QuickBar>
        <Cluster $w={56}>
          <TB face="folder" name="開く" />
          <TB face="form" name="フォーム" />
          <TB face="closeBox" name="閉じる" c="#888" />
        </Cluster>
        <GuideCheck><input type="checkbox" /><Kana>ガイド</Kana></GuideCheck>
        <Combo w={45} h={15} bg="#f1f3f2" name="フォント名" />
        <Spacer $w={5} />
        <Combo w={34} h={15} bg="#f1f3f2" name="サイズ" />
        <Cluster $w={74} $ml={3}>
          <TB face="fontUp" name="拡大" />
          <TB face="fontDown" name="縮小" />
          <TB face={<Glyph $bold>B</Glyph>} name="太字" c="#999" />
          <TB face={<Glyph $bold $shadow>S</Glyph>} name="影" c="#999" />
        </Cluster>
        <TB face={<Glyph $bold>A</Glyph>} name="文字の塗りつぶし" menu c="#999" />
        <TB face={<HollowGlyph $bold>A</HollowGlyph>} name="文字の輪郭" menu c="#b5b5b5" />
        <Cluster $w={54} $ml={2}>
          <TB face="pasteText" name="テキストのみ貼り付け" />
          <TB face="center" name="中央揃え" c="#777" />
          <TB face="bullets" name="箇条書き" />
        </Cluster>
        <TB face={<SpacedGlyph $size={9}>AV</SpacedGlyph>} name="文字の間隔" menu />
        <Cluster $w={56} $ml={1}>
          <TB face="paragraph" name="段落" />
          <TB face="brush" name="書式のコピー" />
          <TB face="shapes" name="図形" />
        </Cluster>
        <Spacer $w={3} />
        <Spin name="図形の高さ" />
        <Spin name="図形の幅" />
        <Spacer $w={3} />
        <TB face="fill" name="図形の塗りつぶし" menu />
        <TB face="outline" name="図形の枠線" menu />
        <TB face="effect" name="図形の効果" menu />
        <TB face="rotate" name="回転" menu />
        <TB face="alignObj" name="配置" menu c="#777" />
        <Cluster $w={93}>
          <TB face="group" name="グループ化" c="#bbb" />
          <TB face="ungroup" name="グループ解除" c="#bbb" />
          <TB face="sync" name="動作設定" />
          <TB face="pane" name="オブジェクトの選択" />
          <TB face="crop" name="トリミング" c="#999" />
        </Cluster>
        <TB face="merge" name="図形の結合" menu c="#c0c0c0" />
        <Divider $gap={2} />
        <TB face="fit" name="全体表示" />
        <Spacer $w={2} />
        <TB face="undo" name="元に戻す" menu />
        <Cluster $w={93}>
          <TB face="printCheck" name="印刷" />
          <TB face="preview" name="印刷プレビュー" />
          <TB face="redo" name="繰り返し" />
          <TB face="page" name="新規" />
          <TB face="save" name="上書き保存" />
        </Cluster>
        <Spacer $w={3} />
        <TB face={<Chevron />} name="カスタマイズ" c="#444" />
      </QuickBar>

      <Work>
        <SlideList>
          <SlideNumber>1</SlideNumber>
          <Thumb aria-label="スライド 1" />
        </SlideList>
        <Editor>
          <Ruler max={16} />
          <Ruler max={9} vertical />
          <Slide>
            <Placeholder $row={2} $title><SlideTitle>タイトルを入力</SlideTitle></Placeholder>
            <Placeholder $row={4}><Subtitle>サブタイトルを入力</Subtitle></Placeholder>
          </Slide>
        </Editor>
      </Work>

      <StatusBar>
        <StatusItem><span><Kana>スライド</Kana> 1/1</span></StatusItem>
        <StatusItem $ml={14} aria-label="スペル チェック"><Icon name="book" size={11} /></StatusItem>
        <StatusItem $ml={11}>日本語</StatusItem>
        <StatusItem $ml={10}><Icon name="access" size={11} /><Kana>アクセシビリティ: 問題ありません</Kana></StatusItem>
        <StatusRight>
          <StatusItem><Icon name="note" size={9} /><Kana>ノート</Kana></StatusItem>
          <StatusItem $ml={12}><Icon name="comment" size={10} /><Kana>コメント</Kana></StatusItem>
          <Spacer $w={12} />
          <ViewButton $active aria-label="標準"><Icon name="normal" /></ViewButton>
          <ViewButton aria-label="スライド一覧"><Icon name="sorter" /></ViewButton>
          <ViewButton aria-label="閲覧表示"><Icon name="reading" /></ViewButton>
          <ViewButton aria-label="スライド ショー"><Icon name="show" /></ViewButton>
          <ZoomButton aria-label="縮小">−</ZoomButton>
          <ZoomRange type="range" aria-label="ズーム" min={10} max={190} defaultValue={77} />
          <ZoomButton aria-label="拡大">+</ZoomButton>
          <ZoomValue $ml={7}>77%</ZoomValue>
          <ViewButton $w={20} aria-label="ウィンドウに合わせる"><Icon name="fitWindow" size={9} /></ViewButton>
        </StatusRight>
      </StatusBar>
    </Shell>
  );
}
